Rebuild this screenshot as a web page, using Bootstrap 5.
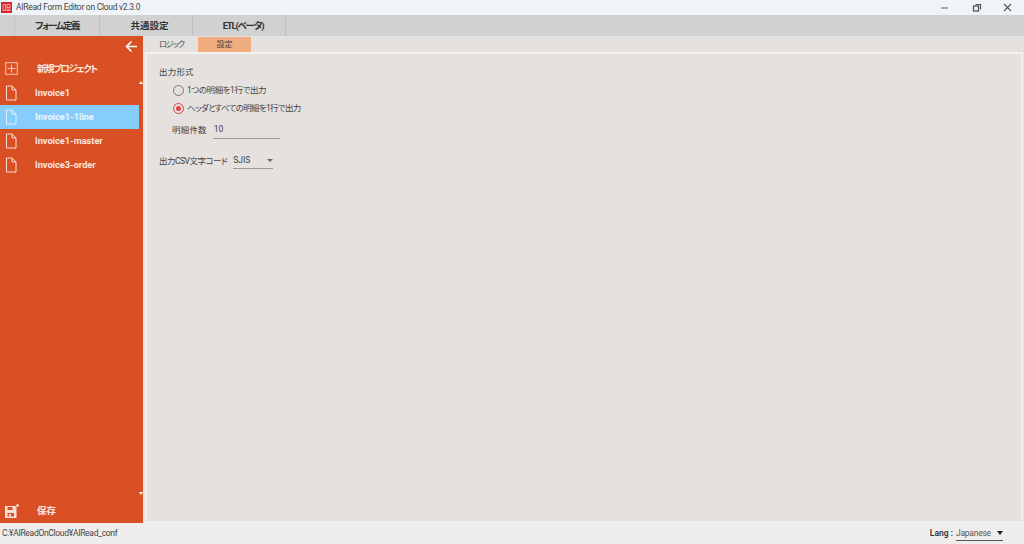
<!DOCTYPE html>
<html lang="ja">
<head>
<meta charset="utf-8">
<title>AIRead Form Editor on Cloud</title>
<link href="https://cdn.jsdelivr.net/npm/bootstrap@5.3.0/dist/css/bootstrap.min.css" rel="stylesheet">
<style>
html,body{height:100%;overflow:hidden}
body{width:1024px;height:544px;background:#e5e1df;color:#333;font-family:Roboto,"Noto Sans CJK JP",sans-serif;font-size:8.5px;line-height:1.2;font-feature-settings:"palt"}
.app-title{height:15px;background:#eff4f9;font-size:8.5px;letter-spacing:-.28px;color:#444}
.app-logo{width:11px;height:11px;margin:0 4px 0 1px;flex:none}
.win-btns{gap:21px;padding-right:11px}
.win-btns svg{width:10px;height:10px;display:block}
.top-tabs{height:21px;background:#d1d1d1;padding-left:14px}
.top-tab{width:93px;height:100%;border-right:1px solid #bfbfbf;border-left:0;font-weight:700;font-size:9.5px;color:#333;display:flex;align-items:center;justify-content:center;padding-left:7px}
.top-first{width:86px;padding-left:0;border-left:1px solid #c4c4c4;letter-spacing:-1.5px}
.top-etl{letter-spacing:-1.2px;padding-left:8px}
.mid{height:487px}
.side{width:143px;background:#d95025;color:#fff;flex:none}
.back-row{height:20px;padding-right:5px}
.side-item{height:24px;font-weight:700;font-size:9.2px;color:#fbe7df}
.side-item svg{width:14px;height:16px;margin-left:4px;flex:none}
.side-item .lbl{margin-left:17px}
.side-new{height:25px;letter-spacing:-1.5px;font-size:9.5px}
.side-new .lbl{margin-left:19px}
.side-new svg{margin-left:5px;width:13px;height:13px}
.side-sel{background:#87cdfc;width:139px;color:#eaf6ff}
.arrow-up,.arrow-dn{width:0;height:0;border-left:2px solid transparent;border-right:2px solid transparent;margin-left:139px}
.arrow-up{border-bottom:3px solid #fff;margin-bottom:-3px}
.arrow-dn{border-top:3px solid #fff}
.side-foot{height:24px}
.side-foot svg{width:15px;height:15px;margin-left:4px}
.side-foot .lbl{margin-left:18px;font-size:9.5px;font-weight:700;color:#fbe7df}
.main-area{padding:1px 0 0 2px;min-width:0}
.sub-tabs{height:15px}
.sub-tab{width:53px;display:flex;align-items:center;justify-content:center;font-size:8px;background:#e3e0de;color:#444}
.sub-logic{letter-spacing:-1.1px}
.sub-on{background:#f0ad80}
.panel{height:471px;margin-right:1px;border:2px solid #f3f1ef;background:#e5e1df;padding:13px 12px}
.f-label{height:12px;color:#444;letter-spacing:.2px;margin-bottom:2px}
.radio-row{height:18px;padding-left:14px;gap:3px;color:#444}
.radio-text-a{letter-spacing:-.45px}
.radio-text-b{letter-spacing:-.7px}
.radio-mark{width:11px;height:11px;border-radius:50%;border:1.3px solid #777;flex:none;background:transparent}
.radio-mark-on{border-color:#e8423c;display:flex;align-items:center;justify-content:center}
.radio-mark-on::after{content:"";width:5px;height:5px;border-radius:50%;background:#e8423c}
.count-row{height:20px;margin-top:3px;padding-left:13px;color:#444}
.count-lbl{letter-spacing:.2px}
.count-input{width:67px;height:18px;border-bottom:1px solid #999;margin-left:6px;display:flex;align-items:center;padding-left:1px}
.csv-row{height:20px;margin-top:11px;color:#444}
.csv-lbl{letter-spacing:-.5px}
.csv-sel{width:40px;height:16px;border-bottom:1px solid #999;margin-left:6px;display:flex;align-items:center;justify-content:space-between}
.tri{width:0;height:0;border-left:3px solid transparent;border-right:3px solid transparent;border-top:3px solid #666}
.foot-bar{height:21px;background:#f0eeec;padding:0 21px 0 2px;color:#444;font-size:8.5px;letter-spacing:-.3px}
.lang-lbl{font-weight:600;color:#333;margin-right:3px;font-size:8.5px;letter-spacing:0}
.lang-sel{width:47px;height:14px;border-bottom:1px solid #555;display:flex;align-items:center;justify-content:space-between;color:#555;letter-spacing:-.25px}
.lang-sel .tri{border-left-width:3.5px;border-right-width:3.5px;border-top:4px solid #222}
</style>
</head>
<body>
<div class="app-title d-flex align-items-center justify-content-between">
  <div class="d-flex align-items-center">
    <svg class="app-logo" viewBox="0 0 11 11"><rect width="11" height="11" fill="#d8262c"/><path d="M2 2.500h2.500v6H2zM6 2.500h3v3H6zM6 7h3v1.500H6z" fill="none" stroke="#f6c9c9" stroke-width=".8"/></svg>
    <span>AIRead Form Editor on Cloud v2.3.0</span>
  </div>
  <div class="win-btns d-flex align-items-center">
    <svg viewBox="0 0 10 10"><path d="M0 5h7" stroke="#777" stroke-width="1.2"/></svg>
    <svg viewBox="0 0 10 10"><rect x="1.500" y="3" width="5" height="5" fill="none" stroke="#555" stroke-width="1.300"/><path d="M3.500 1.500h5v5" fill="none" stroke="#555" stroke-width="1.200"/></svg>
    <svg viewBox="0 0 10 10"><path d="M1 1l7 7M8 1l-7 7" stroke="#555" stroke-width="1.100"/></svg>
  </div>
</div>
<div class="top-tabs d-flex">
  <div class="top-tab top-first">フォーム定義</div>
  <div class="top-tab">共通設定</div>
  <div class="top-tab top-etl">ETL(ベータ)</div>
</div>
<div class="mid d-flex">
  <aside class="side d-flex flex-column">
    <div class="back-row d-flex align-items-center justify-content-end">
      <svg width="13" height="13" viewBox="0 0 13 13"><path d="M12 6.500H2M6.500 1.500l-5 5 5 5" fill="none" stroke="#fff" stroke-width="1.500"/></svg>
    </div>
    <div class="side-item side-new d-flex align-items-center">
      <svg viewBox="0 0 13 13"><rect x=".7" y=".7" width="11.600" height="11.600" fill="none" stroke="#f6c8b3"/><path d="M6.500 2.500v8M2.500 6.500h8" stroke="#f6c8b3"/></svg>
      <span class="lbl">新規プロジェクト</span>
    </div>
    <div class="arrow-up"></div>
    <div class="side-item d-flex align-items-center">
      <svg viewBox="0 0 14 16"><path d="M2.500 1h5.500l4 4v10h-9.500zM8 1v4h4" fill="none" stroke="#fbdccd" stroke-width="1"/></svg>
      <span class="lbl">Invoice1</span>
    </div>
    <div class="side-item side-sel d-flex align-items-center">
      <svg viewBox="0 0 14 16"><path d="M2.500 1h5.500l4 4v10h-9.500zM8 1v4h4" fill="none" stroke="#dff2ff" stroke-width="1"/></svg>
      <span class="lbl">Invoice1-1line</span>
    </div>
    <div class="side-item d-flex align-items-center">
      <svg viewBox="0 0 14 16"><path d="M2.500 1h5.500l4 4v10h-9.500zM8 1v4h4" fill="none" stroke="#fbdccd" stroke-width="1"/></svg>
      <span class="lbl">Invoice1-master</span>
    </div>
    <div class="side-item d-flex align-items-center">
      <svg viewBox="0 0 14 16"><path d="M2.500 1h5.500l4 4v10h-9.500zM8 1v4h4" fill="none" stroke="#fbdccd" stroke-width="1"/></svg>
      <span class="lbl">Invoice3-order</span>
    </div>
    <div class="flex-grow-1 d-flex flex-column justify-content-end"><div class="arrow-dn mb-1"></div></div>
    <div class="side-foot d-flex align-items-center">
      <svg viewBox="0 0 15 15"><path d="M1 2h10l1.500 1.500V14H1z" fill="#fbe3d8"/><rect x="3.500" y="3" width="5" height="3" fill="#d95025"/><rect x="3.500" y="9" width="6.500" height="3.500" fill="#d95025"/><rect x="5" y="10" width="2" height="2.500" fill="#fbe3d8"/><circle cx="13.500" cy="1.500" r="1.200" fill="#fff"/></svg>
      <span class="lbl">保存</span>
    </div>
  </aside>
  <main class="main-area flex-grow-1 d-flex flex-column">
    <div class="sub-tabs d-flex">
      <div class="sub-tab sub-logic">ロジック</div>
      <div class="sub-tab sub-on">設定</div>
    </div>
    <div class="panel">
      <div class="f-label">出力形式</div>
      <div class="radio-row d-flex align-items-center"><span class="radio-mark"></span><span class="radio-text-a">1つの明細を1行で出力</span></div>
      <div class="radio-row d-flex align-items-center"><span class="radio-mark radio-mark-on"></span><span class="radio-text-b">ヘッダとすべての明細を1行で出力</span></div>
      <div class="count-row d-flex align-items-center"><span class="count-lbl">明細件数</span><div class="count-input">10</div></div>
      <div class="csv-row d-flex align-items-center"><span class="csv-lbl">出力CSV文字コード</span><div class="csv-sel"><span>SJIS</span><i class="tri"></i></div></div>
    </div>
  </main>
</div>
<div class="foot-bar d-flex align-items-center justify-content-between">
  <span>C:¥AIReadOnCloud¥AIRead_conf</span>
  <div class="d-flex align-items-center"><span class="lang-lbl">Lang :</span><div class="lang-sel"><span>Japanese</span><i class="tri"></i></div></div>
</div>
<script src="https://cdn.jsdelivr.net/npm/bootstrap@5.3.0/dist/js/bootstrap.bundle.min.js"></script>
</body>
</html>
